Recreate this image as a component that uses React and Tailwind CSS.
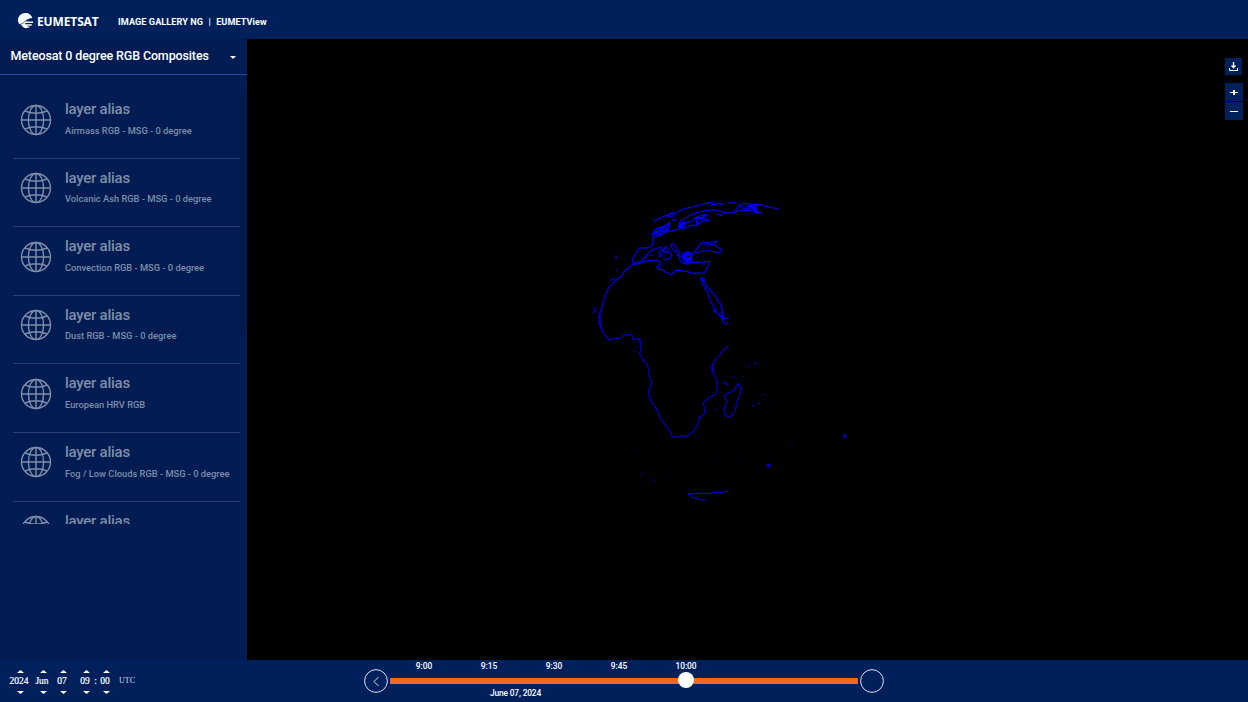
import React from "react";

const layers = [
  "Airmass RGB - MSG - 0 degree",
  "Volcanic Ash RGB - MSG - 0 degree",
  "Convection RGB - MSG - 0 degree",
  "Dust RGB - MSG - 0 degree",
  "European HRV RGB",
  "Fog / Low Clouds RGB - MSG - 0 degree",
  "Microphysics RGB - MSG - 0 degree",
];

const Globe = () => (
  <svg className="ml-[7.5px] mt-[13.5px] h-8 w-8 shrink-0" viewBox="0 0 32 32" fill="none" stroke="#7f8da9" strokeWidth="1.4">
    <circle cx="16" cy="16" r="14.5" />
    <ellipse cx="16" cy="16" rx="7.6" ry="14.5" />
    <path d="M16 1.5v29M1.5 16h29M5 7Q16 11.5 27 7M5 25Q16 20.5 27 25" />
  </svg>
);

const Logo = () => (
  <svg className="h-4 w-4 shrink-0" viewBox="0 0 16 16">
    <path fill="#fff" d="M7.5 0C10.8 0 13.6 2 14.3 5.2C11.5 5.2 9.2 6.6 7.9 8.5H15V10H7.5L6.7 11.3H14.2L13.3 12.7H8.6C9.8 13.5 11 13.8 12 13.8C10.8 14.8 9.2 15.2 7.5 15.2C6 15 4.5 14 3.7 12.3C1.3 11.5 0 9.7 0 7.2C0 3.2 3.2 0 7.5 0Z" />
    <path fill="none" stroke="#00205b" strokeWidth=".8" d="M2 11.3C6 11.2 6.5 6.2 14.2 5.5" />
  </svg>
);

const Up = () => <svg className="h-[3px] w-[7px]" viewBox="0 0 7 3"><path fill="#fff" d="M0 3L3.5 0L7 3Z" /></svg>;
const Down = () => <svg className="h-[3px] w-[7px]" viewBox="0 0 7 3"><path fill="#fff" d="M0 0H7L3.5 3Z" /></svg>;

const Spin = ({ value, className }) => (
  <div className={"flex flex-col items-center " + className}>
    <Up />
    <span className="flex h-[18px] items-center whitespace-nowrap pb-[2px] pr-[2px]">{value}</span>
    <Down />
  </div>
);

const Coastlines = () => (
  <svg className="block h-full w-full" viewBox="247 39 1001 621" fill="none" stroke="#0000dc" strokeLinejoin="round">
    <g transform="translate(580.2 190.2) scale(.33333)" strokeWidth="4">
      <path d="M219 93L243 82L262 74L286 68L310 57L345 48L375 40L400 36M390 45L415 40L435 41M445 38H470M483 39L510 42L540 43L565 50L594 56" />
      <path d="M260 77L274 68L286 72L275 80Z" strokeWidth="4" />
      <path d="M294 108L300 93L325 78L350 67L375 61L400 59L425 64L442 69L462 67L480 60L500 61L520 60L535 70M410 70L425 76L433 68M463 62L475 50L480 42L490 55L510 54L530 42L520 65L545 68" />
      <path d="M294 108L310 98L333 94L344 84L360 76L382 74L367 81L385 91L362 93L351 106L335 105L316 112L295 117L278 122L258 125L240 133L222 142L217 139" />
      <path d="M217 138L225 119L237 113L254 109L268 98L264 117L244 133L231 134L248 116L230 126L224 131L239 121L253 124L259 109M277 91L286 87" strokeWidth="6" />
      <path d="M298 101L317 96L308 105L298 112L312 108M348 90L352 103M345 85L370 83M510 43L525 60M500 48H530M525 50L530 68M296 106H310" strokeWidth="6" stroke="#0000fa" />
      <path d="M217 140L219 158L212 169L195 174L178 173L168 188L158 204L156 211L163 219L180 214L192 206L202 191L216 179L231 174L243 171L245 178L237 185L238 201L247 190L251 177L259 169L267 186L275 194L271 204L255 209L249 204M198 201L203 195M208 196L218 195" />
      <path d="M251 178L256 187L266 187M272 162L280 160L287 170L291 180L298 185L299 193L293 198L288 185L278 177L272 169ZM299 195L298 210L310 220L323 222L333 216L343 217L370 215L387 213L383 230L372 249L355 248L340 250L325 245L300 241L288 240L275 254L258 247L248 239L232 236L231 230L241 222L238 213L210 211L190 214L172 222L158 222" />
      <path d="M309 191L322 186L334 191L333 210L323 218L313 212ZM319 190V217M307 207L325 206L335 213M304 201H315M310 196L330 194M315 216L329 201" strokeWidth="6" stroke="#0000fa" />
      <path d="M334 191L344 189L346 181L358 166L368 155L382 160L393 156L411 152L402 162L389 164L380 158L370 165M402 165L423 177L422 186L407 187L394 182L370 182L348 188M362 222L375 220" />
      <path d="M158 220L150 230L134 242L126 255L105 273L85 293L74 319L67 345L61 370L58 390L60 405L66 420M360 260L370 286L383 305L388 330L402 350L408 365L425 382L430 397L445 402M370 263L374 278L386 295L405 317L423 345L427 375L434 386L446 382M364 260L368 272L374 263M425 350L429 389M401 359L408 367M416 371L425 382" />
      <path d="M108 195V209M108 240L113 239M91 270L103 267M97 264L96 272M36 367H41M40 351L45 358L42 366" strokeWidth="5" opacity=".8" />
      <path d="M59 365L58 405M365 264L371 276M401 355L408 366M426 367L430 389" strokeWidth="6" />
    </g>
    <g transform="translate(580.2 310.3) scale(.33333)" strokeWidth="4" stroke="#0000b8">
      <path d="M64 0L58 15L57 35L64 49L68 68L86 89L100 84L117 85L132 75L147 72L156 76L160 89L177 85L184 95L182 120L178 131L187 146L201 164L205 176L209 200L215 215L207 238L207 259L216 277L231 299L241 325L255 343L270 364L277 380L300 379L322 376L336 367L353 345L357 322L373 311L376 294L368 280L386 263L405 253L411 242L410 208L400 193L398 163L406 147L420 133L433 117L446 107" />
      <path d="M474 218L483 232L481 247L474 264L467 291L459 313L446 320L434 313L431 295L440 277L434 254L449 246L462 241L467 230ZM462 239L475 220" />
      <path d="M162 122H167M168 111H171M176 87L180 99M429 215L445 225M452 199H456M487 199H490M506 170L509 166M522 159H528M549 253H554M517 287H522M532 280H538M461 202H465M396 161V187" strokeWidth="4.5" />
      <path d="M403 294L410 296" opacity=".5" />
      <path d="M58 15L60 40M399 0L410 8M414 8L428 28" strokeWidth="6" />
    </g>
    <g transform="translate(620.2 400.2) scale(.33333)" strokeWidth="4" stroke="#0000b0">
      <path d="M206 283L225 279L260 280L285 278L312 276L326 271M212 289L233 296L260 301M205 282H217M291 273H295" />
      <path d="M203 282H216M440 196H451M445 191V202M673 103V116M676 102V106" strokeWidth="6" stroke="#0000dc" />
      <path d="M151 93V99" strokeWidth="5" />
      <path d="M62 219L69 223M88 231L92 233M102 239L108 243M22 128H24M42 147H45M151 222H153M284 184H287M352 181H354M361 182H363M511 137L514 132M288 26H291M456 8H459" opacity=".65" />
    </g>
  </svg>
);

export default function App() {
  return (
    <div className="flex h-[702px] w-[1248px] flex-col overflow-hidden bg-[#00205b] font-['Roboto',sans-serif] text-white">
      <header className="flex h-[39px] shrink-0 items-center pl-[18px] pt-[3px]">
        <Logo />
        <span className="ml-[3px] mt-[2px] w-[81px] font-['Open_Sans',sans-serif] text-[12px] font-bold leading-4 tracking-[-0.13px]">EUMETSAT</span>
        <span className="mt-[2px] flex gap-[5.3px] whitespace-nowrap text-[9.1px] font-bold leading-4 tracking-[0.09px]">
          <span>IMAGE GALLERY NG</span><span>|</span><span>EUMETView</span>
        </span>
      </header>

      <div className="flex h-[621px] shrink-0">
        <aside className="flex w-[247px] shrink-0 flex-col bg-[#001c52]">
          <div className="flex h-9 shrink-0 items-center justify-between border-b border-[#3049a0] pl-[10.5px] pr-[11px]">
            <span className="mt-[-2px] whitespace-nowrap text-[12.5px] font-medium leading-4 tracking-[-0.13px]">Meteosat 0 degree RGB Composites</span>
            <svg className="mt-[1px] h-[3px] w-[6px]" viewBox="0 0 6 3"><path fill="#fff" d="M0 0H6L3 3Z" /></svg>
          </div>
          <div className="mt-[15px] flex h-[434px] shrink-0 overflow-hidden">
            <div className="ml-[12.5px] w-[227.5px]">
              {layers.map((name) => (
                <div key={name} className="flex h-[68.6px] border-b border-[#2b416f] text-[#7f8da9]">
                  <Globe />
                  <div className="ml-[13px] pt-[9px]">
                    <div className="text-[15px] font-medium leading-[20px] tracking-[-0.25px]">layer alias</div>
                    <div className="mt-[5.6px] whitespace-nowrap text-[9.3px] font-medium leading-3">{name}</div>
                  </div>
                </div>
              ))}
            </div>
            <div className="ml-[1px] mt-[3px] h-[240px] w-[3px] rounded-sm bg-[#001747]" />
          </div>
        </aside>

        <main className="relative w-[1001px] bg-black">
          <Coastlines />
          <div className="absolute left-[978px] top-[19px] flex w-[18px] flex-col">
            <button className="flex h-[17px] w-[17px] items-center justify-center bg-[#00205b]">
              <svg className="h-[9px] w-[9px]" viewBox="0 0 9 9" fill="none" stroke="#fff"><path d="M4.5 0V5M2.5 3.5L4.5 5.5L6.5 3.5" strokeWidth="1.3" /><path d="M.5 6V8.5H8.5V6" /></svg>
            </button>
            <button className="mt-[8px] flex h-[18px] w-[18px] items-center justify-center bg-[#00205b]">
              <svg className="h-[8px] w-[8px]" viewBox="0 0 8 8" stroke="#fff"><path d="M0 4.5H8" strokeWidth="1" /><path d="M4 2V7" strokeWidth="2" /></svg>
            </button>
            <button className="mt-px flex h-[18px] w-[18px] items-center justify-center bg-[#00205b]">
              <span className="h-px w-2 bg-white" />
            </button>
          </div>
        </main>
      </div>

      <footer className="flex h-[42px] shrink-0">
        <div className="flex w-[364px] pl-[10px] pt-[10px] font-['Liberation_Serif',serif] text-[9.5px] leading-3 [-webkit-text-stroke:0.2px_white]">
          <Spin value="2024" className="w-[20px]" />
          <Spin value="Jun" className="ml-[4px] w-[18px]" />
          <Spin value="07" className="ml-[4px] w-[14px]" />
          <Spin value="09" className="ml-[9px] w-[14px]" />
          <span className="flex h-[22px] w-[6px] items-center justify-center pr-px">:</span>
          <Spin value="00" className="w-[14px]" />
          <span className="ml-[6px] flex h-[22px] items-center text-[8px] text-[#d4daea] [-webkit-text-stroke:0px]">UTC</span>
        </div>
        <svg className="mt-[9px] h-6 w-6 shrink-0" viewBox="0 0 24 24" fill="none" stroke="#d9dfec">
          <circle cx="12" cy="12" r="11.4" /><path d="M14.5 8L10 12.5L14.5 17" />
        </svg>
        <div className="ml-[2px] flex w-[468px] shrink-0 flex-col text-[8.4px] font-medium leading-[10px]">
          <div className="flex h-[12px] items-center pl-[1.5px]">
            {["9:00", "9:15", "9:30", "9:45"].map((t) => <span key={t} className="w-[65px] text-center">{t}</span>)}
            <span className="ml-[2px] w-[65px] text-center">10:00</span>
          </div>
          <div className="mt-[6px] flex h-[6px] items-center bg-[#f26822]">
            <span className="-mt-[2px] ml-[288px] h-4 w-4 shrink-0 rounded-full bg-[#fffdfd]" />
          </div>
          <div className="mt-[4px] w-[251px] text-center leading-[11px] tracking-[-0.14px]">June 07, 2024</div>
        </div>
        <svg className="ml-[2px] mt-[9px] h-6 w-6 shrink-0" viewBox="0 0 24 24" fill="none" stroke="#d9dfec"><circle cx="12" cy="12" r="11.4" /></svg>
      </footer>
    </div>
  );
}
